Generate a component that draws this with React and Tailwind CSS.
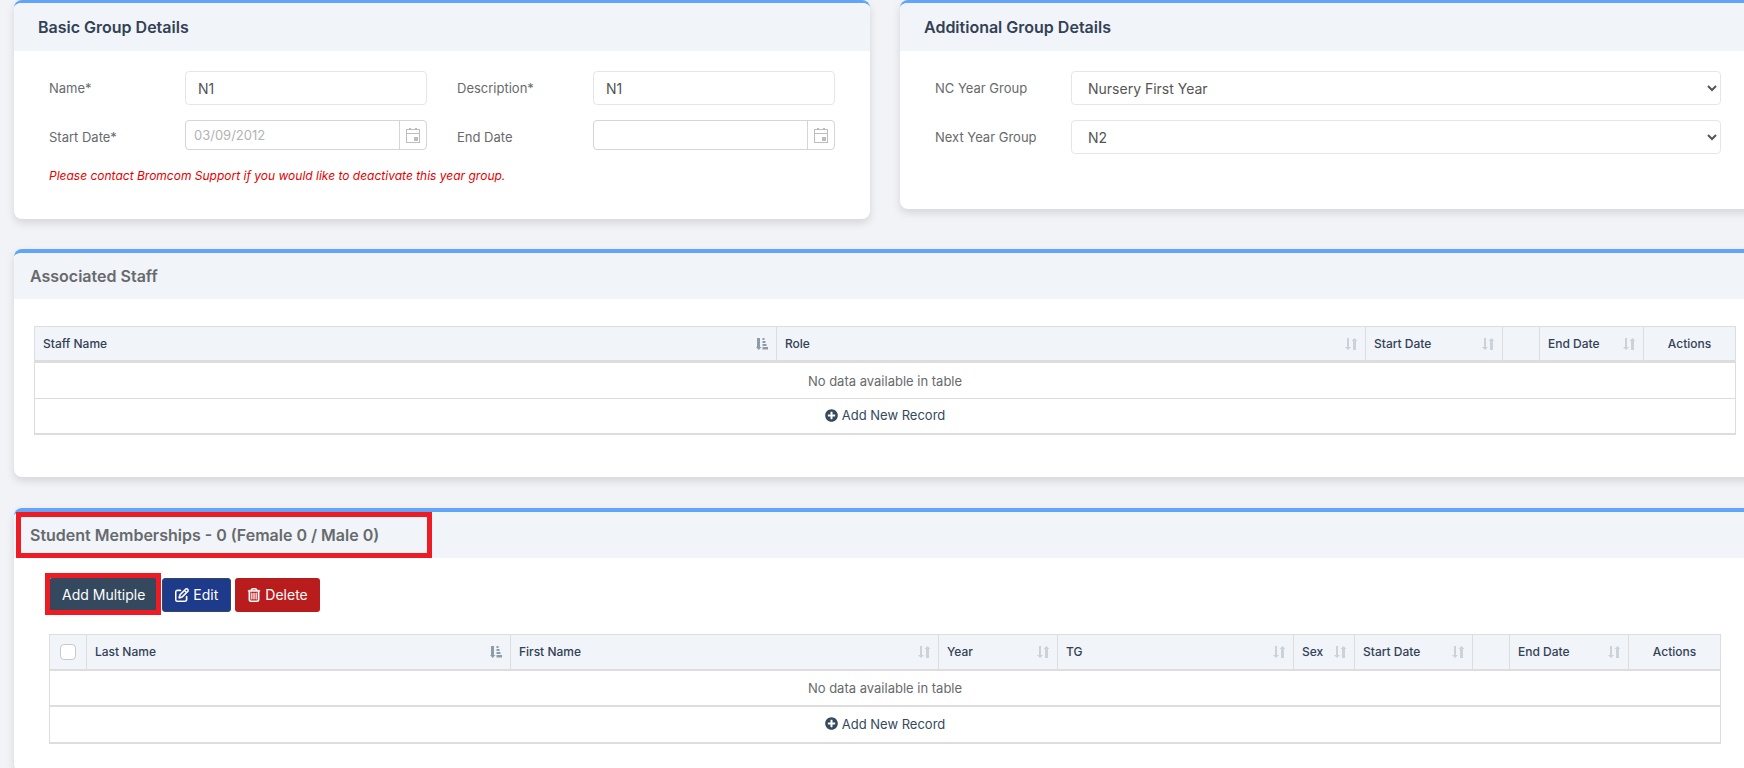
import { FaPlusCircle } from "react-icons/fa";
import { FaRegPenToSquare, FaRegTrashCan } from "react-icons/fa6";

const staffColumns = [
  { label: "Staff Name", width: "w-[43.62%]", sort: "asc" },
  { label: "Role", width: "", sort: "none" },
  { label: "Start Date", width: "w-[137px]", sort: "none" },
  { label: "", width: "w-[37px]" },
  { label: "End Date", width: "w-[104px]", sort: "none" },
  { label: "Actions", width: "w-[92px]", center: true },
];

const studentColumns = [
  { label: "Select all", width: "w-[37px]", checkbox: true },
  { label: "Last Name", width: "w-[25.37%]", sort: "asc" },
  { label: "First Name", width: "", sort: "none" },
  { label: "Year", width: "w-[119px]", sort: "none" },
  { label: "TG", width: "w-[14.12%]", sort: "none" },
  { label: "Sex", width: "w-[61px]", sort: "none" },
  { label: "Start Date", width: "w-[118px]", sort: "none" },
  { label: "", width: "w-[37px]" },
  { label: "End Date", width: "w-[119px]", sort: "none" },
  { label: "Actions", width: "w-[92px]", center: true },
];

function SortIcon({ direction }) {
  if (direction === "asc") {
    return (
      <svg width="12" height="12" viewBox="0 0 12 12" fill="#8f9ba8" className="shrink-0">
        <path d="M1 0h3v9h1.5L2.75 12 0 9h1z" />
        <path d="M6.500 0h2v2h-2zM6.500 3h3v2h-3zM6.500 6h4v2h-4zM6.500 9h5.500v2.500h-5.500z" />
      </svg>
    );
  }

  return (
    <svg width="12" height="12" viewBox="0 0 12 12" fill="#cbd2da" className="shrink-0">
      <path d="M2 0h2v9h2l-3 3-3-3h2z" />
      <path d="M8 12h3V3h1.500L9.500 0l-3 3H8z" />
    </svg>
  );
}

function CalendarIcon() {
  return (
    <svg width="14" height="16" viewBox="0 0 14 16" fill="#bcbcbc">
      <path d="M0 2h14v14H0zM1 3v3h12V3zM1 7v8h12V7z" fillRule="evenodd" />
      <path d="M3 1h2v2H3zM9 1h2v2H9zM8 10h4v4H8z" />
    </svg>
  );
}

function Card({ className = "", children }) {
  return (
    <section
      className={`rounded-lg border-[#60a5fa] bg-white shadow-[0_4px_9px_rgba(0,0,0,0.12)] ${className}`}
    >
      {children}
    </section>
  );
}

function TextField({ id, label, value }) {
  return (
    <div className="flex items-center">
      <label htmlFor={id} className="w-[136px] shrink-0">
        {label}
      </label>
      <input
        id={id}
        type="text"
        defaultValue={value}
        className="h-[34px] w-full min-w-0 rounded border border-[#e5e6e7] bg-white px-3 text-sm text-[#555555]"
      />
    </div>
  );
}

function DateField({ id, label, value = "" }) {
  return (
    <div className="flex h-[34px] items-start">
      <label htmlFor={id} className="w-[136px] shrink-0 leading-[34px]">
        {label}
      </label>
      <div className="flex h-[30px] w-full min-w-0 overflow-hidden rounded border border-[#d5d5d5]">
        <input
          id={id}
          type="text"
          defaultValue={value}
          className="w-full min-w-0 px-2 text-[13px] text-[#b3b3b3]"
        />
        <button
          type="button"
          aria-label={`Pick ${label}`}
          className="flex w-[27px] shrink-0 items-center justify-center border-l border-[#d5d5d5]"
        >
          <CalendarIcon />
        </button>
      </div>
    </div>
  );
}

function SelectField({ id, label, value }) {
  return (
    <div className="flex items-center">
      <label htmlFor={id} className="w-[136px] shrink-0">
        {label}
      </label>
      <select
        id={id}
        className="h-[34px] w-full min-w-0 rounded border border-[#e5e6e7] bg-white px-3 text-sm text-[#555555]"
      >
        <option>{value}</option>
      </select>
    </div>
  );
}

function DataTable({ columns, headBorder, rowBorder, lastRow }) {
  return (
    <table className="w-full table-fixed border-separate border-spacing-0 border-t border-l border-[#dddddd]">
      <thead>
        <tr className="h-9 bg-[#f1f4f9] text-left text-xs text-[#334155]">
          {columns.map((column, index) => (
            <th
              key={index}
              className={`border-r border-[#dddddd] px-2 py-0 font-medium ${column.width} ${headBorder}`}
            >
              {column.checkbox ? (
                <input
                  type="checkbox"
                  aria-label={column.label}
                  className="mx-auto block size-4 appearance-none rounded border border-[#c8c8c8] bg-white"
                />
              ) : (
                <div
                  className={`flex items-center ${column.center ? "justify-center" : "justify-between"}`}
                >
                  {column.label}
                  {column.sort && <SortIcon direction={column.sort} />}
                </div>
              )}
            </th>
          ))}
        </tr>
      </thead>
      <tbody className="text-center">
        <tr className="h-9">
          <td colSpan={columns.length} className={`border-r border-[#dddddd] ${rowBorder}`}>
            No data available in table
          </td>
        </tr>
        <tr className={lastRow}>
          <td colSpan={columns.length} className="border-r border-b-2 border-[#dddddd]">
            <button type="button" className="inline-flex items-center gap-1 text-[#34495e]">
              <FaPlusCircle size={13} />
              Add New Record
            </button>
          </td>
        </tr>
      </tbody>
    </table>
  );
}

function App() {
  return (
    <div className="h-screen overflow-hidden bg-[#f1f3f7] font-['Inter',sans-serif] text-[13px] leading-5 text-[#676a6c]">
      <main className="-mr-3 ml-[14px]">
        <div className="grid grid-cols-2 items-start gap-[30px]">
          <Card className="border-t-[3px]">
            <h2 className="rounded-t-lg bg-[#f1f4f9] px-6 py-3 text-base leading-6 font-semibold text-[#334155]">
              Basic Group Details
            </h2>
            <div className="px-[35px] pt-5 pb-[33px]">
              <div className="grid grid-cols-2 gap-x-[30px] gap-y-[15px]">
                <TextField id="name" label="Name*" value="N1" />
                <TextField id="description" label="Description*" value="N1" />
                <DateField id="start-date" label="Start Date*" value="03/09/2012" />
                <DateField id="end-date" label="End Date" />
              </div>
              <p className="mt-3 text-xs leading-5 text-[#e60000] italic">
                Please contact Bromcom Support if you would like to deactivate this year group.
              </p>
            </div>
          </Card>

          <Card className="border-t-[3px]">
            <h2 className="rounded-t-lg bg-[#f1f4f9] px-6 py-3 text-base leading-6 font-semibold text-[#334155]">
              Additional Group Details
            </h2>
            <div className="grid gap-[15px] px-[35px] pt-5 pb-[55px]">
              <SelectField id="nc-year" label="NC Year Group" value="Nursery First Year" />
              <SelectField id="next-year" label="Next Year Group" value="N2" />
            </div>
          </Card>
        </div>

        <Card className="mt-[30px] border-t-4">
          <h2 className="rounded-t-lg bg-[#f1f4f9] px-4 py-[11px] text-base leading-6 font-semibold text-[#676a6c]">
            Associated Staff
          </h2>
          <div className="px-5 pt-[27px] pb-[42px]">
            <DataTable
              columns={staffColumns}
              headBorder="border-b-[3px]"
              rowBorder="border-b"
              lastRow="h-9"
            />
          </div>
        </Card>

        <Card className="mt-[31px] border-t-4">
          <div className="relative rounded-t-lg bg-[#f1f4f9] px-4 py-[11px]">
            <h2 className="text-base leading-6 font-semibold text-[#676a6c]">
              Student Memberships - 0 (Female 0 / Male 0)
            </h2>
            <span className="pointer-events-none absolute inset-y-0 left-0.5 w-[416px] border-[5px] border-[#ed1c24]" />
          </div>
          <div className="px-[35px] pt-5 pb-7">
            <div className="flex gap-1 text-sm text-white">
              <div className="relative">
                <button type="button" className="h-[34px] rounded-[3px] bg-[#34495e] px-[13px]">
                  Add Multiple
                </button>
                <span className="pointer-events-none absolute -top-[5px] -right-[3px] -bottom-[3px] -left-1 border-[5px] border-[#ed1c24]" />
              </div>
              <button
                type="button"
                className="flex h-[34px] items-center gap-1 rounded-[3px] border border-[#34495e] bg-[#1e3a8a] px-3"
              >
                <FaRegPenToSquare size={14} stroke="currentColor" strokeWidth={14} />
                Edit
              </button>
              <button
                type="button"
                className="flex h-[34px] items-center gap-1 rounded-[3px] bg-[#b91c1c] px-3"
              >
                <FaRegTrashCan size={14} stroke="currentColor" strokeWidth={14} />
                Delete
              </button>
            </div>
            <div className="mt-[22px]">
              <DataTable
                columns={studentColumns}
                headBorder="border-b-2"
                rowBorder="border-b-2"
                lastRow="h-[37px]"
              />
            </div>
          </div>
        </Card>
      </main>
    </div>
  );
}

export default App;
